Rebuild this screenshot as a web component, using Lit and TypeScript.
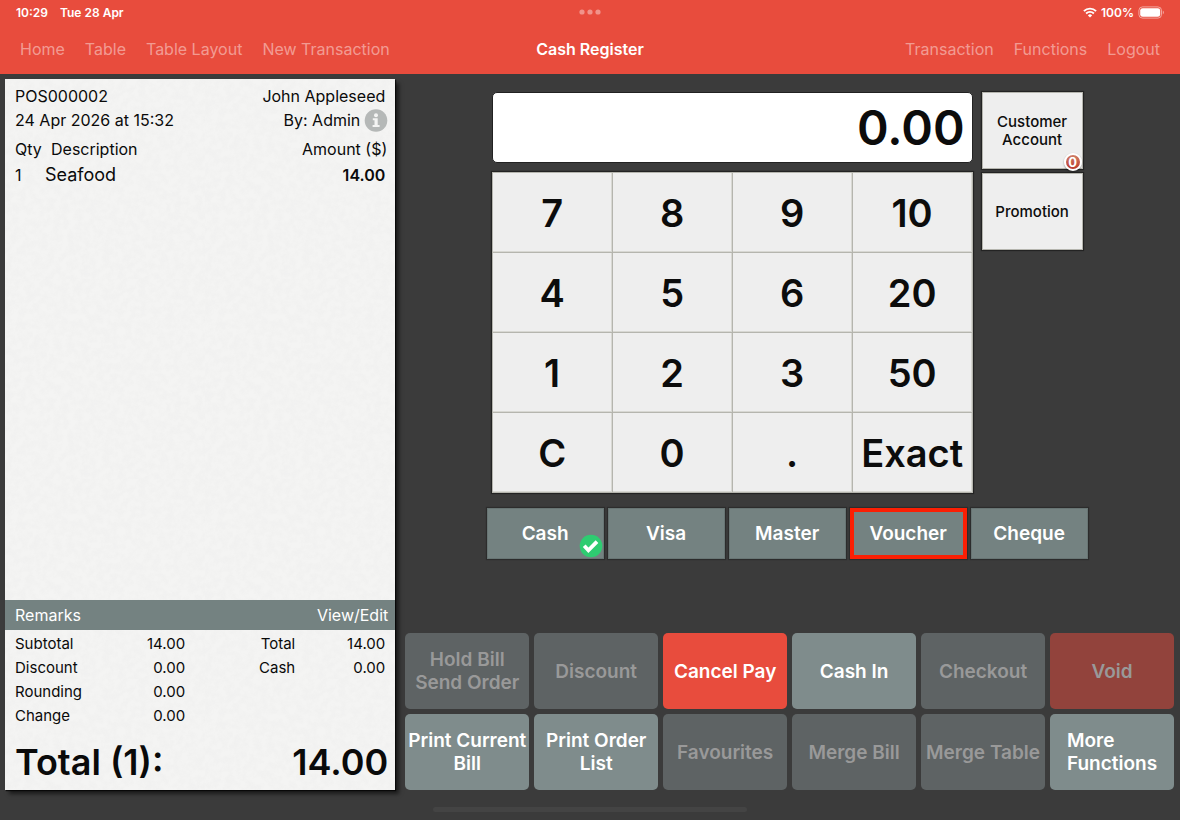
import { LitElement, html, css, svg } from "lit";
import { customElement, state } from "lit/decorators.js";
import { classMap } from "lit/directives/class-map.js";

type Action = { label: string[]; kind?: "danger"; disabled?: boolean; left?: boolean };

const KEYS = ["7", "8", "9", "10", "4", "5", "6", "20", "1", "2", "3", "50", "C", "0", ".", "Exact"];
const PAYMENTS = ["Cash", "Visa", "Master", "Voucher", "Cheque"];
const ACTIONS: Action[] = [
  { label: ["Hold Bill", "Send Order"], disabled: true },
  { label: ["Discount"], disabled: true },
  { label: ["Cancel Pay"], kind: "danger" },
  { label: ["Cash In"] },
  { label: ["Checkout"], disabled: true },
  { label: ["Void"], kind: "danger", disabled: true },
  { label: ["Print Current", "Bill"] },
  { label: ["Print Order", "List"] },
  { label: ["Favourites"], disabled: true },
  { label: ["Merge Bill"], disabled: true },
  { label: ["Merge Table"], disabled: true },
  { label: ["More", "Functions"], left: true },
];

const reset = css`
  * { box-sizing: border-box; }
  button { font: inherit; color: inherit; margin: 0; padding: 0; border: 0; background: none; cursor: pointer; }
`;

@customElement("pos-header")
export class PosHeader extends LitElement {
  static styles = [reset, css`
    :host { display: block; background: #e84c3d; color: #fff; padding: 0 20px; }
    .bar { display: grid; grid-template-columns: 1fr auto 1fr; align-items: center; }
    .status { height: 24px; margin: 0 -4px; font-size: 12px; font-weight: 600; }
    .menu { height: 50px; font-size: 16px; }
    .group { display: flex; align-items: center; gap: 20px; }
    .clock { gap: 12px; }
    .end { justify-content: flex-end; }
    .power { gap: 4px; }
    .link { color: rgba(255, 255, 255, 0.46); text-decoration: none; white-space: nowrap; }
    .title { margin: 0; font-size: 16px; font-weight: 600; }
    svg { display: block; }
  `];

  render() {
    const link = (t: string) => html`<a class="link" href="#">${t}</a>`;
    return html`
      <div class="bar status">
        <div class="group clock"><span>10:29</span><span>Tue 28 Apr</span></div>
        <svg width="22" height="6" viewBox="0 0 22 6" fill="#fff" fill-opacity=".4" aria-hidden="true">
          <circle cx="3" cy="3" r="2.6"/><circle cx="11" cy="3" r="2.6"/><circle cx="19" cy="3" r="2.6"/>
        </svg>
        <div class="group end power">
          <svg width="14" height="11" viewBox="0 0 14 11" fill="none" stroke="#fff" stroke-width="1.9" aria-hidden="true">
            <path d="M.9 4.1A8.7 8.7 0 0 1 13.1 4.1"/>
            <path d="M3.1 6.5A5.6 5.6 0 0 1 10.9 6.5"/>
            <path d="M7 10.6L4.9 8.4A3 3 0 0 1 9.1 8.4Z" fill="#fff" stroke="none"/>
          </svg>
          <span>100%</span>
          <svg width="26" height="13" viewBox="0 0 26 13" aria-hidden="true">
            <rect x=".9" y=".9" width="22.6" height="11.2" rx="3.6" fill="none" stroke="#fff" stroke-opacity=".5"/>
            <rect x="2.2" y="2.2" width="20" height="8.6" rx="2.4" fill="#fff"/>
            <path d="M24.8 4.6a2.2 2.2 0 0 1 0 3.8z" fill="#fff" fill-opacity=".5"/>
          </svg>
        </div>
      </div>
      <div class="bar menu">
        <nav class="group" aria-label="Main">${["Home", "Table", "Table Layout", "New Transaction"].map(link)}</nav>
        <h1 class="title">Cash Register</h1>
        <nav class="group end" aria-label="Account">${["Transaction", "Functions", "Logout"].map(link)}</nav>
      </div>`;
  }
}

@customElement("pos-receipt")
export class PosReceipt extends LitElement {
  static styles = [reset, css`
    :host {
      display: flex; flex-direction: column; color: #0a0a0a; font-size: 16px; line-height: 24px;
      background: #f4f4f3 url("data:image/svg+xml,%3Csvg xmlns='http://www.w3.org/2000/svg' width='200' height='200'%3E%3Cfilter id='n'%3E%3CfeTurbulence type='fractalNoise' baseFrequency='.14' numOctaves='4' stitchTiles='stitch'/%3E%3CfeColorMatrix values='0 0 0 0 .5 0 0 0 0 .5 0 0 0 0 .5 .12 0 0 0 -.04'/%3E%3C/filter%3E%3Crect width='200' height='200' filter='url(%23n)'/%3E%3C/svg%3E");
      box-shadow: 4px 4px 4px rgba(0, 0, 0, 0.55), 1px 1px 1px #111;
    }
    .head { padding: 5px 10px 0; }
    .line { display: flex; justify-content: space-between; align-items: center; }
    .by { display: flex; align-items: center; gap: 4px; margin-right: -3px; }
    .info { display: block; width: 24px; height: 24px; }
    .items { width: 100%; margin-top: 5px; border-collapse: collapse; table-layout: fixed; }
    .items th, .items td { padding: 0; font-weight: 400; text-align: left; }
    .items td { height: 28px; }
    .items .qty { width: 40px; white-space: nowrap; }
    .items .desc { padding-left: 6px; }
    .items .name { font-size: 18px; }
    .items th.amount { text-align: right; padding-right: 8px; }
    .items td.amount { text-align: right; padding-right: 10px; font-weight: 600; }
    .items .first { padding-left: 10px; }
    .remarks {
      display: flex; align-items: center; justify-content: space-between; height: 30px; margin-top: auto;
      padding: 0 7px 0 10px; background: #748281; color: #fff;
    }
    .totals { display: grid; grid-template-columns: 17fr 20fr; padding: 2px 10px 0; font-size: 15px; }
    .sums { display: grid; grid-template-columns: 1fr auto; align-content: start; margin: 0; }
    .paid { grid-template-columns: 11fr 9fr; text-align: right; }
    .sums dd { margin: 0; text-align: right; }
    .grand {
      display: flex; justify-content: space-between; padding: 10px 7px 3px 10px; margin: 0;
      font-size: 36px; font-weight: 600; line-height: 49px;
    }
  `];

  render() {
    return html`
      <div class="head">
        <div class="line"><span>POS000002</span><span>John Appleseed</span></div>
        <div class="line">
          <span>24 Apr 2026 at 15:32</span>
          <span class="by">By: Admin
            <button aria-label="Bill information">
              <svg class="info" viewBox="0 0 24 24" aria-hidden="true">
                <circle cx="12" cy="12.5" r="11.3" fill="#b5b8b7"/>
                <circle cx="12" cy="7.3" r="2" fill="#f4f4f3"/>
                <path d="M8.8 10.3h4.9v6.6h1.9v2H8.6v-2h1.9v-4.6H8.8z" fill="#f4f4f3"/>
              </svg>
            </button>
          </span>
        </div>
      </div>
      <table class="items">
        <thead><tr><th class="qty first">Qty</th><th class="desc">Description</th><th class="amount">Amount ($)</th></tr></thead>
        <tbody><tr><td class="first">1</td><td class="name">Seafood</td><td class="amount">14.00</td></tr></tbody>
      </table>
      <div class="remarks"><span>Remarks</span><button>View/Edit</button></div>
      <div class="totals">
        <dl class="sums">
          <dt>Subtotal</dt><dd>14.00</dd>
          <dt>Discount</dt><dd>0.00</dd>
          <dt>Rounding</dt><dd>0.00</dd>
          <dt>Change</dt><dd>0.00</dd>
        </dl>
        <dl class="sums paid">
          <dt>Total</dt><dd>14.00</dd>
          <dt>Cash</dt><dd>0.00</dd>
        </dl>
      </div>
      <p class="grand"><span>Total (1):</span><span>14.00</span></p>`;
  }
}

@customElement("pos-till")
export class PosTill extends LitElement {
  @state() private method = "Cash";

  static styles = [reset, css`
    :host { display: flex; flex-direction: column; align-items: center; gap: 15px; }
    .entry { display: grid; grid-template-columns: 481px 101px; gap: 9px; align-items: start; }
    .column { display: grid; gap: 9px; }
    .side { gap: 4px; }
    .display {
      width: 100%; height: 71px; padding: 0 7px; border: 1px solid #222; border-radius: 5px; background: #fff;
      font: inherit; font-size: 48px; font-weight: 600; color: #0c0c0c; text-align: right; outline: 0;
    }
    .keys {
      display: grid; grid-template-columns: repeat(4, 1fr); gap: 1px; padding: 1px; background: #b5b5ae;
      box-shadow: 0 0 1px 1px rgba(0, 0, 0, 0.4);
    }
    .key {
      height: 79px; background: #eee; color: #0c0c0c; font-size: 38px; font-weight: 600;
      box-shadow: inset -1px -1px 0 #d8d8d3;
    }
    .option {
      position: relative; height: 77px; border: 1px solid #b5b5ae; background: #eee; color: #0c0c0c;
      font-size: 15px; font-weight: 500; line-height: 18px; box-shadow: 0 0 1px 1px rgba(0, 0, 0, 0.4);
    }
    .badge {
      position: absolute; right: 0; bottom: -3px; width: 18px; height: 18px; border: 2px solid #fff; border-radius: 50%;
      background: linear-gradient(#cf7f68, #bb3a2b); color: #fff; font-size: 13px; font-weight: 700; line-height: 14px;
      box-shadow: 0 1px 2px rgba(0, 0, 0, 0.4);
    }
    .payments { display: grid; grid-template-columns: repeat(5, 117px); gap: 4px; }
    .pay {
      position: relative; height: 51px; border: 1px solid #687574; background: #748281; color: #fff;
      font-size: 19px; font-weight: 600; box-shadow: 0 0 1px 1px rgba(0, 0, 0, 0.25);
    }
    .marked { border: 4px solid #fb1f04; }
    .check { position: absolute; right: 0; bottom: 0; width: 24px; height: 24px; }
  `];

  render() {
    const tick = svg`<circle cx="12" cy="12" r="11.3" fill="#2ecc71"/>
      <path d="M5.2 11.8l4.2 4.5 8.6-8.6" fill="none" stroke="#fff" stroke-width="3.8"/>`;
    return html`
      <div class="entry">
        <div class="column">
          <input class="display" aria-label="Amount tendered" value="0.00" readonly />
          <div class="keys">${KEYS.map((k) => html`<button class="key">${k}</button>`)}</div>
        </div>
        <div class="column side">
          <button class="option">Customer<br />Account<span class="badge">0</span></button>
          <button class="option">Promotion</button>
        </div>
      </div>
      <div class="payments">
        ${PAYMENTS.map((p) => html`
          <button class=${classMap({ pay: true, marked: p === "Voucher" })} @click=${() => (this.method = p)}>
            ${p}${p === this.method ? html`<svg class="check" viewBox="0 0 24 24" aria-hidden="true">${tick}</svg>` : ""}
          </button>`)}
      </div>`;
  }
}

@customElement("pos-actions")
export class PosActions extends LitElement {
  static styles = [reset, css`
    :host { display: grid; grid-template-columns: repeat(6, 1fr); gap: 5px; }
    .action {
      display: flex; align-items: center; justify-content: center; height: 76px; border-radius: 5px; background: #7f8c8c;
      color: #fff; font-size: 19px; font-weight: 600; line-height: 23px; white-space: nowrap;
    }
    .danger { background: #e84c3d; }
    .action:disabled { background: #5e6364; color: #999; cursor: default; }
    .danger:disabled { background: #92433c; }
    .left { text-align: left; }
  `];

  render() {
    return ACTIONS.map((a) => html`
      <button class=${classMap({ action: true, danger: a.kind === "danger", left: !!a.left })} ?disabled=${!!a.disabled}>
        <span>${a.label[0]}${a.label[1] ? html`<br />${a.label[1]}` : ""}</span>
      </button>`);
  }
}

@customElement("app-root")
export class AppRoot extends LitElement {
  static styles = css`
    :host {
      display: flex; flex-direction: column; min-height: 100vh; background: #3b3b3b;
      font-family: Inter, "Liberation Sans", sans-serif;
    }
    .main { flex: 1; display: grid; grid-template-columns: minmax(390px, 33fr) 65fr; gap: 10px; padding: 5px 6px 0 5px; }
    .work { display: flex; flex-direction: column; justify-content: space-between; gap: 20px; }
    .till { padding-top: 13px; margin: 0 5px 0 0; }
    .foot { display: flex; height: 22px; align-items: flex-end; justify-content: center; padding-bottom: 8px; }
    .grip { width: 314px; height: 5px; border-radius: 3px; background: #444; }
  `;

  render() {
    return html`
      <pos-header></pos-header>
      <main class="main">
        <pos-receipt></pos-receipt>
        <section class="work">
          <pos-till class="till"></pos-till>
          <pos-actions></pos-actions>
        </section>
      </main>
      <div class="foot"><div class="grip"></div></div>`;
  }
}
